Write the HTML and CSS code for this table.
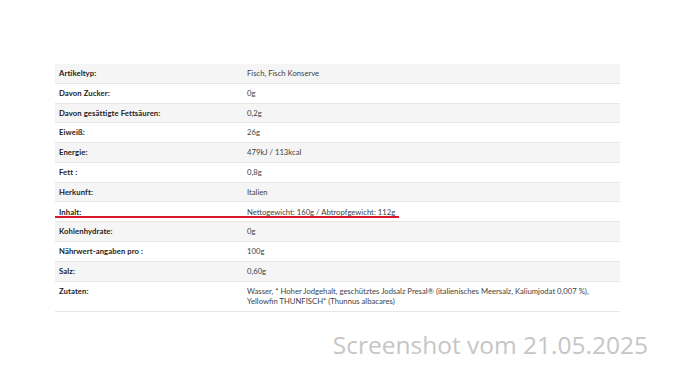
FILE: index.html
```html
<!DOCTYPE html>
<html lang="de">
<head>
    <meta charset="UTF-8">
    <meta name="viewport" content="width=device-width, initial-scale=1.0">
    <title>Produktdetails</title>
    <link rel="stylesheet" href="styles.css">
</head>
<body>
    <div class="sheet">
        <div class="details">
            <table class="specs">
                <tr><th>Artikeltyp:</th><td>Fisch, Fisch Konserve</td></tr>
                <tr><th>Davon Zucker:</th><td>0g</td></tr>
                <tr><th>Davon gesättigte Fettsäuren:</th><td>0,2g</td></tr>
                <tr><th>Eiweiß:</th><td>26g</td></tr>
                <tr><th>Energie:</th><td>479kJ / 113kcal</td></tr>
                <tr><th>Fett :</th><td>0,8g</td></tr>
                <tr><th>Herkunft:</th><td>Italien</td></tr>
                <tr><th>Inhalt:</th><td>Nettogewicht: 160g / Abtropfgewicht: 112g</td></tr>
                <tr><th>Kohlenhydrate:</th><td>0g</td></tr>
                <tr><th>Nährwert-angaben pro :</th><td>100g</td></tr>
                <tr><th>Salz:</th><td>0,60g</td></tr>
                <tr><th>Zutaten:</th><td>Wasser, * Hoher Jodgehalt, geschütztes Jodsalz Presal® (italienisches Meersalz, Kaliumjodat 0,007 %),<br>Yellowfin THUNFISCH* (Thunnus albacares)</td></tr>
            </table>
            <div class="mark"></div>
        </div>
        <div class="stamp">Screenshot vom 21.05.2025</div>
    </div>
</body>
</html>
```

FILE: styles.css
```css
body {
    margin: 0;
    padding: 0;
    background: #ffffff;
    font-family: Lato, "Noto Sans", sans-serif;
}
.sheet {
    width: 686px;
    height: 382px;
    padding-top: 64px;
    box-sizing: border-box;
}
.details {
    position: relative;
    margin-left: 55px;
    width: 565px;
}
.specs {
    width: 100%;
    border-collapse: collapse;
    font-size: 7.7px;
    line-height: 10.5px;
    color: #3a3a3a;
}
.specs th,
.specs td {
    text-align: left;
    vertical-align: top;
    padding: 4.15px 4px;
    border-bottom: 1px solid #e6e6e6;
}
.specs th {
    width: 180px;
    font-weight: 700;
    color: #222222;
    letter-spacing: 0.1px;
}
.specs td {
    color: #3f3f3f;
}
.specs tr:nth-child(odd) {
    background: #f5f5f5;
}
/* red underline drawn across the Inhalt row */
.mark {
    position: absolute;
    left: 0;
    top: 151.5px;
    width: 344px;
    height: 2px;
    background: #d9182a;
}
.stamp {
    margin-top: 16px;
    padding-right: 38px;
    text-align: right;
    font-family: "Open Sans", sans-serif;
    font-size: 24.5px;
    color: #c6c6c6;
}
```
